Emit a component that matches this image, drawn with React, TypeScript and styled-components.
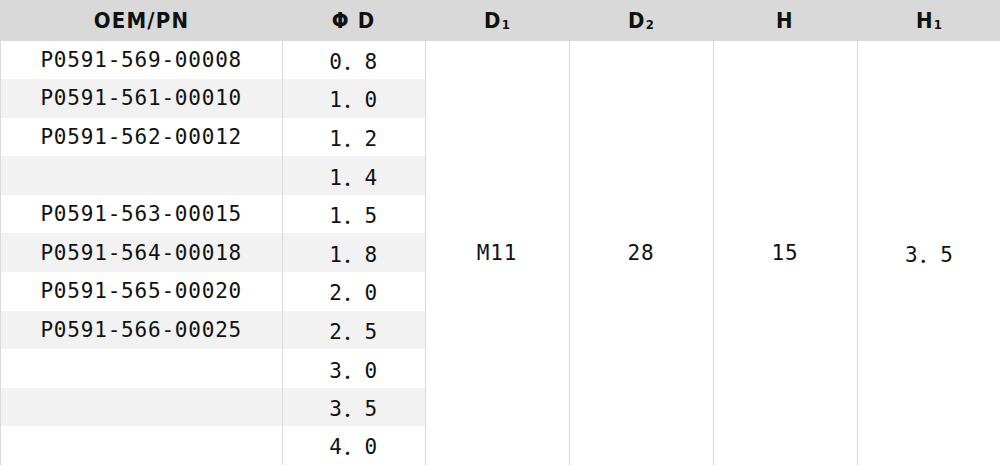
import React from "react";
import styled, { createGlobalStyle } from "styled-components";

type Part = {
    pn: string;
    d: string;
};

const parts: Part[] = [
    { pn: "P0591-569-00008", d: "0．8" },
    { pn: "P0591-561-00010", d: "1．0" },
    { pn: "P0591-562-00012", d: "1．2" },
    { pn: "", d: "1．4" },
    { pn: "P0591-563-00015", d: "1．5" },
    { pn: "P0591-564-00018", d: "1．8" },
    { pn: "P0591-565-00020", d: "2．0" },
    { pn: "P0591-566-00025", d: "2．5" },
    { pn: "", d: "3．0" },
    { pn: "", d: "3．5" },
    { pn: "", d: "4．0" },
];

const GlobalStyle = createGlobalStyle`
    html, body {
        margin: 0;
        padding: 0;
        background: #ffffff;
    }
`;

const STable = styled.table`
    width: 1000px;
    border-collapse: collapse;
    table-layout: fixed;
    border: 1px solid #dadada;
    color: #111111;
`;

const SHeadRow = styled.tr`
    height: 40px;
    background: #d9d9d9;
`;

const STh = styled.th<{ $w: number }>`
    width: ${(p) => p.$w}px;
    padding: 0;
    font-family: "DejaVu Sans Condensed", "DejaVu Sans", sans-serif;
    font-stretch: condensed;
    font-weight: 700;
    font-size: 22px;
    letter-spacing: 1.2px;
    text-align: center;
    vertical-align: middle;
`;

const SSub = styled.span`
    font-size: 13px;
    letter-spacing: 0;
    vertical-align: -1px;
`;

const SRow = styled.tr<{ $odd: boolean }>`
    height: 38.6px;
    background: ${(p) => (p.$odd ? "#f2f2f2" : "#ffffff")};
`;

const STd = styled.td`
    padding: 0;
    border-right: 1px solid #dadada;
    font-family: "DejaVu Sans Mono", "Noto Sans CJK SC", monospace;
    font-size: 21px;
    letter-spacing: 0.8px;
    text-align: center;
    vertical-align: middle;
    white-space: nowrap;
`;

const SMerged = styled(STd)`
    background: #ffffff;
    border-left: 1px solid #dadada;
`;

export default function App() {
    return (
        <>
            <GlobalStyle />
            <STable>
                <thead>
                    <SHeadRow>
                        <STh $w={281}>OEM/PN</STh>
                        <STh $w={143}>Φ D</STh>
                        <STh $w={144}>D<SSub>1</SSub></STh>
                        <STh $w={144}>D<SSub>2</SSub></STh>
                        <STh $w={144}>H</STh>
                        <STh $w={144}>H<SSub>1</SSub></STh>
                    </SHeadRow>
                </thead>
                <tbody>
                    {parts.map((part, i) => (
                        <SRow key={part.d} $odd={i % 2 === 1}>
                            <STd>{part.pn}</STd>
                            <STd>{part.d}</STd>
                            {i === 0 && (
                                <>
                                    <SMerged rowSpan={parts.length}>M11</SMerged>
                                    <SMerged rowSpan={parts.length}>28</SMerged>
                                    <SMerged rowSpan={parts.length}>15</SMerged>
                                    <SMerged rowSpan={parts.length}>3．5</SMerged>
                                </>
                            )}
                        </SRow>
                    ))}
                </tbody>
            </STable>
        </>
    );
}
